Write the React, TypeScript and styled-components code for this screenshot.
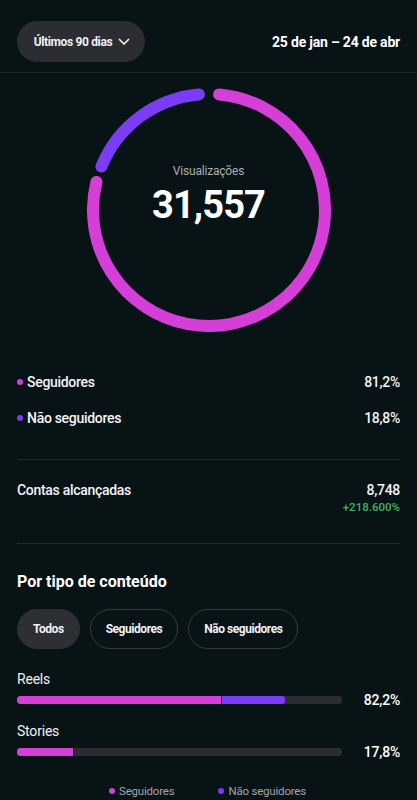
import styled, { createGlobalStyle } from "styled-components";

const PINK = "#d53fd8";
const PURPLE = "#7b3cf6";
const BG = "#081316";

const GlobalStyle = createGlobalStyle`
    html, body { margin: 0; padding: 0; background: ${BG}; }
    body { font-family: Roboto, "Liberation Sans", Arial, sans-serif; color: #f2f3f4; -webkit-font-smoothing: antialiased; }
    * { box-sizing: border-box; }
`;

const Page = styled.div`
    width: 417px; min-height: 800px; background: ${BG}; display: flex; flex-direction: column;
`;
const Header = styled.header`
    height: 73px; padding: 21px 17px 0 17px; display: flex; justify-content: space-between; align-items: flex-start;
    border-bottom: 1px solid #1f282b;
`;
const RangeBtn = styled.button`
    height: 41px; width: 128px; border: 0; border-radius: 21px; background: #2b2d33; color: #f1f1f3;
    font-family: inherit; font-size: 12px; font-weight: 700; letter-spacing: -0.35px;
    display: flex; align-items: center; justify-content: center; gap: 6px; padding: 0 0 0 2px;
`;
const DateRange = styled.div`
    height: 41px; display: flex; align-items: center; font-size: 14px; font-weight: 700; color: #fff; letter-spacing: -0.2px;
`;
const DonutWrap = styled.div`
    margin: 15px auto 0; width: 244px; height: 244px; display: grid;
    & > * { grid-area: 1 / 1; }
`;
const DonutText = styled.div`
    display: flex; flex-direction: column; align-items: center; padding-top: 75px;
`;
const DonutLabel = styled.div`
    font-size: 12px; line-height: 16px; color: #a9aeb1; letter-spacing: -0.2px;
`;
const DonutValue = styled.div`
    margin-top: 4px; font-size: 38px; line-height: 44px; font-weight: 700; color: #fff; letter-spacing: -0.9px;
`;
const Section = styled.section<{ $pt: number; $pb: number; $border?: boolean }>`
    margin: 0 17px; padding: ${(p) => p.$pt}px 0 ${(p) => p.$pb}px;
    border-bottom: ${(p) => (p.$border ? "1px solid #232a2e" : "none")};
`;
const ShareRow = styled.div`
    height: 36px; display: flex; align-items: center; justify-content: space-between;
    font-size: 14px; font-weight: 500; color: #f4f4f5; letter-spacing: -0.3px;
`;
const Label = styled.span`
    display: flex; align-items: center; gap: 4px;
`;
const Dot = styled.span<{ $color: string }>`
    width: 6px; height: 6px; border-radius: 50%; background: ${(p) => p.$color}; display: inline-block;
`;
const StatRow = styled.div`
    display: flex; justify-content: space-between; align-items: flex-start; font-size: 14px; font-weight: 500; letter-spacing: -0.3px;
`;
const StatName = styled.div`
    line-height: 20px;
`;
const StatValues = styled.div`
    display: flex; flex-direction: column; align-items: flex-end;
`;
const StatValue = styled.div`
    line-height: 18px; margin-top: 1px;
`;
const StatDelta = styled.div`
    line-height: 16px; font-size: 11.5px; font-weight: 500; color: #3fb463; letter-spacing: 0;
`;
const Title = styled.h2`
    margin: 0; font-size: 16px; line-height: 20px; font-weight: 700; color: #fff;
`;
const Chips = styled.div`
    margin-top: 17px; display: flex; gap: 10px;
`;
const Chip = styled.button<{ $active?: boolean }>`
    height: 40px; padding: 0 15px; border-radius: 20px; font-family: inherit; font-size: 12px; font-weight: 700; letter-spacing: -0.45px; color: #f2f2f4;
    background: ${(p) => (p.$active ? "#2d2f35" : "transparent")};
    border: 1px solid ${(p) => (p.$active ? "#2d2f35" : "#363a3f")};
`;
const TypeBlock = styled.div<{ $mt: number }>`
    margin-top: ${(p) => p.$mt}px;
`;
const TypeName = styled.div`
    font-size: 14px; line-height: 18px; color: #f0f0f2; margin-bottom: 8px; letter-spacing: -0.2px;
`;
const BarRow = styled.div`
    height: 8px; display: flex; align-items: center; gap: 18px;
`;
const Track = styled.div`
    flex: 1; height: 8px; border-radius: 3px; background: #2a2c31; display: flex; overflow: hidden;
`;
const Fill = styled.div<{ $color: string }>`
    height: 100%; background: ${(p) => p.$color}; border-radius: 0 3px 3px 0;
    &:first-child { border-radius: 3px 0 0 3px; border-right: 1px solid ${BG}; }
`;
const Pct = styled.div`
    width: 40px; text-align: right; font-size: 14px; font-weight: 500; color: #fff; line-height: 18px; letter-spacing: -0.2px;
`;
const Legend = styled.div`
    margin-top: 27px; display: flex; justify-content: center; gap: 44px; padding-right: 2px;
    font-size: 11.5px; line-height: 16px; color: #a3a4ab; letter-spacing: -0.2px;
`;

function Chevron() {
    return (
        <svg width="12" height="8" viewBox="0 0 12 8" fill="none">
            <path d="M1.5 1.5 L6 6 L10.5 1.5" stroke="#f1f1f3" strokeWidth="1.7" strokeLinecap="round" strokeLinejoin="round" />
        </svg>
    );
}

const pt = (a: number, r: number, c: number) => {
    const rad = (a * Math.PI) / 180;
    return `${(c + r * Math.sin(rad)).toFixed(2)} ${(c - r * Math.cos(rad)).toFixed(2)}`;
};
const arc = (a1: number, a2: number, r: number, c: number) =>
    `M ${pt(a1, r, c)} A ${r} ${r} 0 ${a2 - a1 > 180 ? 1 : 0} 1 ${pt(a2, r, c)}`;

function Donut() {
    return (
        <svg width="244" height="244" viewBox="0 0 244 244">
            <path d={arc(5, 284, 116, 122)} stroke={PINK} strokeWidth="12" strokeLinecap="round" fill="none" />
            <path d={arc(292, 355, 116, 122)} stroke={PURPLE} strokeWidth="12" strokeLinecap="round" fill="none" />
        </svg>
    );
}

const types = [
    { name: "Reels", seg: [[PINK, 205], [PURPLE, 63]], pct: "82,2%", mt: 21 },
    { name: "Stories", seg: [[PINK, 57]], pct: "17,8%", mt: 18 },
];

export default function App() {
    return (
        <Page>
            <GlobalStyle />
            <Header>
                <RangeBtn>Últimos 90 dias <Chevron /></RangeBtn>
                <DateRange>25 de jan – 24 de abr</DateRange>
            </Header>
            <DonutWrap>
                <Donut />
                <DonutText>
                    <DonutLabel>Visualizações</DonutLabel>
                    <DonutValue>31,557</DonutValue>
                </DonutText>
            </DonutWrap>
            <Section $pt={32} $pb={23} $border>
                <ShareRow><Label><Dot $color={PINK} />Seguidores</Label><span>81,2%</span></ShareRow>
                <ShareRow><Label><Dot $color={PURPLE} />Não seguidores</Label><span>18,8%</span></ShareRow>
            </Section>
            <Section $pt={20} $pb={28} $border>
                <StatRow>
                    <StatName>Contas alcançadas</StatName>
                    <StatValues>
                        <StatValue>8,748</StatValue>
                        <StatDelta>+218.600%</StatDelta>
                    </StatValues>
                </StatRow>
            </Section>
            <Section $pt={28} $pb={0}>
                <Title>Por tipo de conteúdo</Title>
                <Chips>
                    <Chip $active>Todos</Chip>
                    <Chip>Seguidores</Chip>
                    <Chip>Não seguidores</Chip>
                </Chips>
                {types.map((t) => (
                    <TypeBlock key={t.name} $mt={t.mt}>
                        <TypeName>{t.name}</TypeName>
                        <BarRow>
                            <Track>
                                {t.seg.map(([color, w], i) => (
                                    <Fill key={i} $color={color as string} style={{ width: `${w}px` }} />
                                ))}
                            </Track>
                            <Pct>{t.pct}</Pct>
                        </BarRow>
                    </TypeBlock>
                ))}
                <Legend>
                    <Label><Dot $color={PINK} />Seguidores</Label>
                    <Label><Dot $color={PURPLE} />Não seguidores</Label>
                </Legend>
            </Section>
        </Page>
    );
}
